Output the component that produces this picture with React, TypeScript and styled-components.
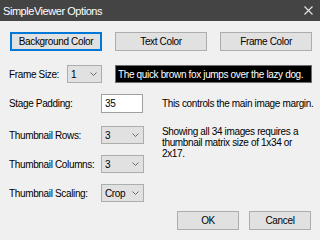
import React from "react";
import styled, { createGlobalStyle } from "styled-components";

const Global = createGlobalStyle`
  html, body { margin: 0; padding: 0; background: #f0f0f0; }
  body { font-family: "Liberation Sans", Arial, sans-serif; font-size: 10px; letter-spacing: -0.35px; color: #000; }
`;

const Window = styled.div`
  width: 320px;
  height: 240px;
  overflow: hidden;
  background: #f0f0f0;
  display: flex;
  flex-direction: column;
  white-space: nowrap;
`;

const TitleBar = styled.div`
  height: 21px;
  flex: none;
  background: #444444;
  color: #ffffff;
  display: flex;
  align-items: center;
  justify-content: space-between;
  padding: 0 7px 0 3px;
  font-size: 11px;
  letter-spacing: -0.45px;
`;

const CloseIcon = () => (
  <svg width="9" height="9" viewBox="0 0 9 9">
    <path d="M0.5 0.5 L8.5 8.5 M8.5 0.5 L0.5 8.5" stroke="#e6e6e6" strokeWidth="1.1" fill="none" />
  </svg>
);

const ButtonRow = styled.div`
  display: flex;
  justify-content: space-between;
  margin: 11px 8px 0 10px;
`;

const Button = styled.div<{ $focused?: boolean; $w?: number }>`
  width: ${(p) => p.$w ?? 92}px;
  height: 19px;
  box-sizing: border-box;
  background: #e1e1e1;
  border: 1px solid ${(p) => (p.$focused ? "#0078d7" : "#adadad")};
  box-shadow: ${(p) => (p.$focused ? "inset 0 0 0 1px #0078d7" : "none")};
  display: flex;
  align-items: center;
  justify-content: center;
`;

const FrameRow = styled.div`
  display: flex;
  align-items: center;
  margin: 14px 8px 0 9px;
`;

const Label = styled.div<{ $w?: number; $h?: number }>`
  width: ${(p) => p.$w ?? 92}px;
  flex: none;
  grid-column: 1;
  height: ${(p) => p.$h ?? 18}px;
  display: flex;
  align-items: center;
`;

const Select = styled.div<{ $w: number }>`
  width: ${(p) => p.$w}px;
  height: 18px;
  box-sizing: border-box;
  background: #e1e1e1;
  border: 1px solid #adadad;
  display: flex;
  align-items: center;
  justify-content: space-between;
  padding: 0 4px 0 3px;
`;

const Chevron = () => (
  <svg width="7" height="4" viewBox="0 0 7 4">
    <path d="M0.5 0.5 L3.5 3.5 L6.5 0.5" stroke="#6a6a6a" strokeWidth="1" fill="none" />
  </svg>
);

const Preview = styled.div`
  flex: 1;
  margin-left: 13px;
  height: 18px;
  box-sizing: border-box;
  background: #000;
  border: 1px solid #6e6e6e;
  color: #fff;
  display: flex;
  align-items: center;
  padding-left: 2px;
`;

const Input = styled.div`
  width: 42px;
  height: 19px;
  box-sizing: border-box;
  background: #fff;
  border: 1px solid #a0a0a0;
  display: flex;
  align-items: center;
  padding-left: 3px;
`;

const Grid = styled.div`
  display: grid;
  grid-template-columns: 92px 43px 1fr;
  grid-template-rows: 21px 18px 18px 18px;
  row-gap: 11px;
  margin: 11px 8px 0 9px;
  align-items: start;
  & > ${Select}, & > ${Input} {
    grid-column: 2;
  }
`;

const Note = styled.div<{ $row: string; $wrap?: boolean }>`
  grid-column: 3;
  grid-row: ${(p) => p.$row};
  margin-left: 18px;
  line-height: 11px;
  white-space: ${(p) => (p.$wrap ? "normal" : "nowrap")};
  width: ${(p) => (p.$wrap ? "140px" : "auto")};
  padding-top: ${(p) => (p.$wrap ? "0px" : "4px")};
`;

const Footer = styled.div`
  display: flex;
  justify-content: flex-end;
  gap: 10px;
  margin: 9px 9px 0 0;
`;

export default function App() {
  return (
    <>
      <Global />
      <Window>
        <TitleBar>
          <span>SimpleViewer Options</span>
          <CloseIcon />
        </TitleBar>
        <ButtonRow>
          <Button $focused>Background Color</Button>
          <Button>Text Color</Button>
          <Button>Frame Color</Button>
        </ButtonRow>
        <FrameRow>
          <Label $w={58}>Frame Size:</Label>
          <Select $w={35}>
            <span>1</span>
            <Chevron />
          </Select>
          <Preview>The quick brown fox jumps over the lazy dog.</Preview>
        </FrameRow>
        <Grid>
          <Label $h={19}>Stage Padding:</Label>
          <Input>35</Input>
          <Note $row="1">This controls the main image margin.</Note>
          <Label>Thumbnail Rows:</Label>
          <Select $w={43}>
            <span>3</span>
            <Chevron />
          </Select>
          <Note $row="2 / span 3" $wrap>
            Showing all 34 images requires a thumbnail matrix size of 1x34 or 2x17.
          </Note>
          <Label>Thumbnail Columns:</Label>
          <Select $w={43}>
            <span>3</span>
            <Chevron />
          </Select>
          <Label>Thumbnail Scaling:</Label>
          <Select $w={43}>
            <span>Crop</span>
            <Chevron />
          </Select>
        </Grid>
        <Footer>
          <Button $w={62}>OK</Button>
          <Button $w={62}>Cancel</Button>
        </Footer>
      </Window>
    </>
  );
}
